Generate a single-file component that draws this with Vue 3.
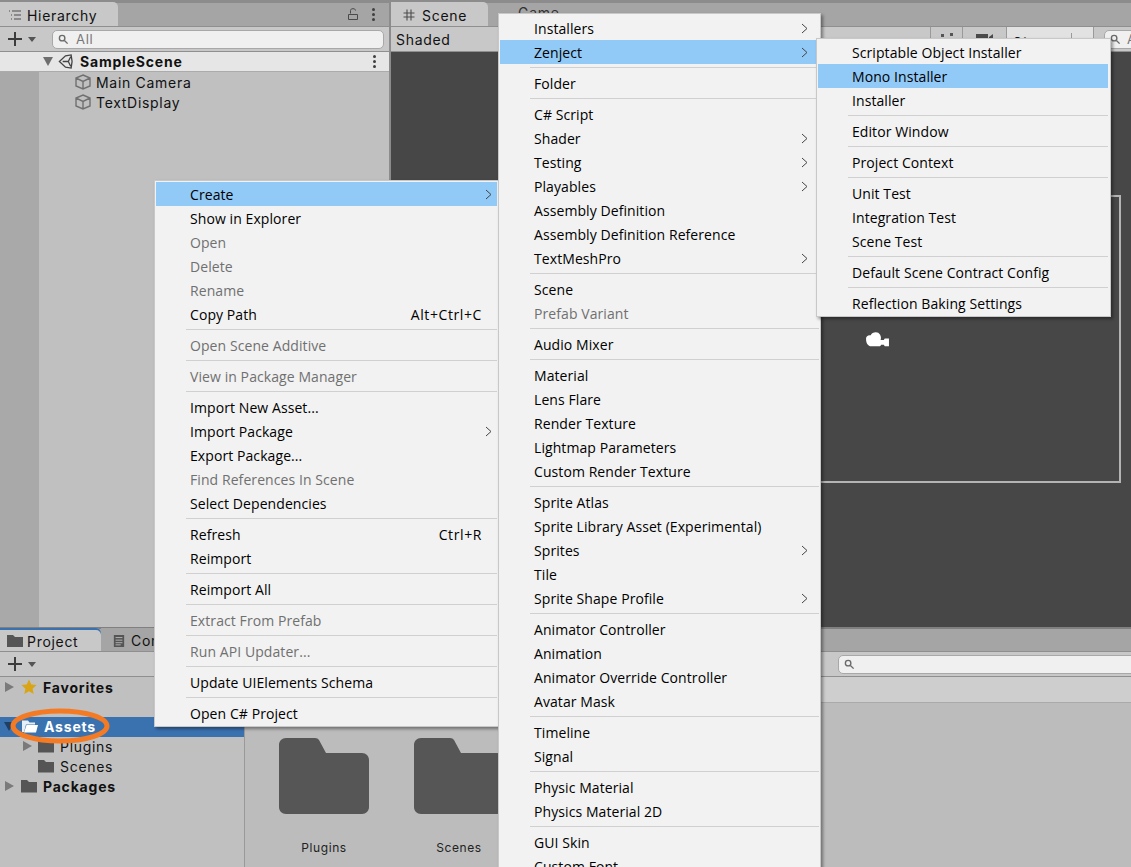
<template>
  <div class="editor">
    <div class="top-split">
      <section class="panel hierarchy">
        <div class="tabbar">
          <div class="tab hier-tab">
            <svg class="tab-icon" viewBox="0 0 14 12"><path d="M1 2h1M4 2h9M3 6h1M6 6h7M3 10h1M6 10h7" stroke="#4d4d4d" stroke-width="1.2" fill="none"/></svg>
            <span>Hierarchy</span>
          </div>
          <div class="tab-tools">
            <svg class="lock" viewBox="0 0 10 12"><path d="M2.500 5.500V2.500C2.500 1.300 3.500 .7 5 .7S7.500 1.300 7.500 2.500M.5 6.500h9v5h-9z" stroke="#4a4a4a" fill="none"/></svg>
            <span class="kebab"><i></i><i></i><i></i></span>
          </div>
        </div>
        <div class="toolbar">
          <svg class="plus" viewBox="0 0 16 16"><path d="M8 1v14M1 8h14" stroke="#3c3c3c" stroke-width="2"/></svg>
          <span class="caret"></span>
          <div class="search hier-search">
            <svg class="glass" viewBox="0 0 12 12"><circle cx="4.500" cy="4.500" r="3" stroke="#6a6a6a" stroke-width="1.500" fill="none"/><path d="M7 7l3.500 3.500" stroke="#6a6a6a" stroke-width="1.500"/></svg>
            <span>All</span>
          </div>
        </div>
        <div class="scene-row">
          <span class="tri tri-down"></span>
          <svg class="unity" viewBox="0 0 16 16"><path d="M1.500 8L8 2l6-1 1 7-1 7-6-1zM5 8h6M11 8l2.500-5M11 8l2.500 5" stroke="#444" stroke-width="1.400" fill="none"/></svg>
          <b>SampleScene</b>
          <span class="kebab row-kebab"><i></i><i></i><i></i></span>
        </div>
        <div class="hier-list">
          <div v-for="name in hierarchyItems" :key="name" class="hier-item">
            <svg class="cube" viewBox="0 0 16 16"><path d="M8 1l7 3v8l-7 3-7-3V4zM1 4l7 3.500L15 4M8 7.500V15" stroke="#707070" stroke-width="1.400" fill="none"/></svg>
            <span>{{ name }}</span>
          </div>
        </div>
      </section>

      <section class="panel scene">
        <div class="tabbar">
          <div class="tab scene-tab">
            <svg class="tab-icon hash" viewBox="0 0 12 12"><path d="M4 .5v11M8 .5v11M.5 4h11M.5 8h11" stroke="#4d4d4d" stroke-width="1.100" fill="none"/></svg>
            <span>Scene</span>
          </div>
          <div class="tab game-tab">Game</div>
        </div>
        <div class="toolbar scene-toolbar">
          <span>Shaded</span>
          <div class="scene-tools">
            <span class="tool tool-a"><svg viewBox="0 0 18 10"><path d="M3 2h3v3H3zM12 1h3v3h-3zM7 6h4v4H7z" fill="#555"/></svg></span>
            <span class="tool tool-b"><svg viewBox="0 0 18 10"><path d="M0 2h12v8H0zM13 5l4-3v8l-4-3z" fill="#4a4a4a"/></svg></span>
            <span class="gizmos"><span>Gizmos</span><i></i></span>
            <div class="search scene-search">
              <svg class="glass" viewBox="0 0 12 12"><circle cx="4.500" cy="4.500" r="3" stroke="#6a6a6a" stroke-width="1.500" fill="none"/><path d="M7 7l3.500 3.500" stroke="#6a6a6a" stroke-width="1.500"/></svg>
              <span>All</span>
            </div>
          </div>
        </div>
        <div class="viewport">
          <div class="game-frame"></div>
          <svg class="camera" viewBox="0 0 24 18"><path d="M1 8c0-2 2-3.500 4.500-3 1-3 7-4.500 9-.5 1 2 1 3.500.5 5l3 0 1-1.500h4v7.500h-4l-1-1.500h-2.500c-.5 1-1 1.500-2 1.500H6c-3 0-5-3-5-7z" fill="#fff"/></svg>
        </div>
      </section>
    </div>

    <section class="panel project">
      <div class="tabbar project-tabs">
        <div class="tab project-tab">
          <svg class="tab-icon" viewBox="0 0 16 14"><path d="M0 1h6l2 2h8v10H0z" fill="#555"/></svg>
          <span>Project</span>
        </div>
        <div class="tab console-tab">
          <svg class="tab-icon" viewBox="0 0 12 14"><path d="M0 0h12v14H0z" fill="#555"/><path d="M2 3h8M2 6h8M2 9h8M2 11.500h6" stroke="#c0c0c0"/></svg>
          <span>Console</span>
        </div>
      </div>
      <div class="toolbar project-toolbar">
        <svg class="plus" viewBox="0 0 16 16"><path d="M8 1v14M1 8h14" stroke="#3c3c3c" stroke-width="2"/></svg>
        <span class="caret"></span>
        <div class="search project-search">
          <svg class="glass" viewBox="0 0 12 12"><circle cx="4.500" cy="4.500" r="3" stroke="#6a6a6a" stroke-width="1.500" fill="none"/><path d="M7 7l3.500 3.500" stroke="#6a6a6a" stroke-width="1.500"/></svg>
        </div>
      </div>
      <div class="project-body">
        <div class="tree">
          <div class="tree-row root">
            <span class="tri tri-right"></span>
            <svg class="star" viewBox="0 0 16 16"><path d="M8 .5l2.300 5 5.200.6-3.900 3.600 1.100 5.300L8 12.300 3.300 15l1.100-5.300L.5 6.100l5.200-.6z" fill="#d9a514"/></svg>
            <b>Favorites</b>
          </div>
          <div class="tree-gap"></div>
          <div class="tree-row root selected">
            <span class="tri tri-down dark"></span>
            <svg class="folder" viewBox="0 0 16 14"><path d="M0 1.500h6l1.500 2H13v2H4L2 13H0z" fill="#e6eef7"/><path d="M4.500 6H16l-2 7.500H2z" fill="#fff"/></svg>
            <b>Assets</b>
          </div>
          <div class="tree-row child">
            <span class="tri tri-right"></span>
            <svg class="folder" viewBox="0 0 16 14"><path d="M0 1h6l2 2h8v10.500H0z" fill="#555"/></svg>
            <span>Plugins</span>
          </div>
          <div class="tree-row child no-arrow">
            <svg class="folder" viewBox="0 0 16 14"><path d="M0 1h6l2 2h8v10.500H0z" fill="#555"/></svg>
            <span>Scenes</span>
          </div>
          <div class="tree-row root">
            <span class="tri tri-right"></span>
            <svg class="folder" viewBox="0 0 16 14"><path d="M0 1h6l2 2h8v10.500H0z" fill="#555"/></svg>
            <b>Packages</b>
          </div>
        </div>
        <div class="assets-view">
          <div class="breadcrumb"></div>
          <div class="asset-grid">
            <div v-for="name in assetFolders" :key="name" class="asset">
              <svg class="big-folder" viewBox="0 0 90 76"><path d="M7 0h29c2 0 3 .7 4 2l7 13h36c4 0 7 3 7 7v47c0 4-3 7-7 7H7c-4 0-7-3-7-7V7c0-4 3-7 7-7z" fill="#565656"/></svg>
              <span>{{ name }}</span>
            </div>
          </div>
        </div>
      </div>
    </section>

    <svg class="annotation" viewBox="0 0 100 36"><ellipse cx="50" cy="18" rx="47" ry="15" fill="none" stroke="#f47b24" stroke-width="5"/></svg>

    <div v-for="menu in menus" :key="menu.id" class="menu" :class="`menu-${menu.id}`">
      <template v-for="(item, i) in menu.items" :key="i">
        <div v-if="item === '-'" class="sep"></div>
        <div
          v-else
          class="item"
          :class="{ active: item.active, disabled: item.disabled }"
        >
          <span class="label">{{ item.label }}</span>
          <span v-if="item.keys" class="keys">{{ item.keys }}</span>
          <svg v-if="item.sub" class="chev" viewBox="0 0 7 11"><path d="M1 1l5 4.500L1 10" stroke="#444" fill="none"/></svg>
        </div>
      </template>
    </div>
  </div>
</template>

<script setup>
const hierarchyItems = ['Main Camera', 'TextDisplay']
const assetFolders = ['Plugins', 'Scenes']

const t = (label, opts = {}) => ({ label, ...opts })
const off = (label) => ({ label, disabled: true })
const sub = (label, opts = {}) => ({ label, sub: true, ...opts })

const menus = [
  {
    id: 'main',
    items: [
      sub('Create', { active: true }), t('Show in Explorer'), off('Open'), off('Delete'), off('Rename'),
      t('Copy Path', { keys: 'Alt+Ctrl+C' }), '-',
      off('Open Scene Additive'), '-',
      off('View in Package Manager'), '-',
      t('Import New Asset...'), sub('Import Package'), t('Export Package...'), off('Find References In Scene'), t('Select Dependencies'), '-',
      t('Refresh', { keys: 'Ctrl+R' }), t('Reimport'), '-',
      t('Reimport All'), '-',
      off('Extract From Prefab'), '-',
      off('Run API Updater...'), '-',
      t('Update UIElements Schema'), '-',
      t('Open C# Project'),
    ],
  },
  {
    id: 'create',
    items: [
      sub('Installers'), sub('Zenject', { active: true }), '-',
      t('Folder'), '-',
      t('C# Script'), sub('Shader'), sub('Testing'), sub('Playables'), t('Assembly Definition'), t('Assembly Definition Reference'), sub('TextMeshPro'), '-',
      t('Scene'), off('Prefab Variant'), '-',
      t('Audio Mixer'), '-',
      t('Material'), t('Lens Flare'), t('Render Texture'), t('Lightmap Parameters'), t('Custom Render Texture'), '-',
      t('Sprite Atlas'), t('Sprite Library Asset (Experimental)'), sub('Sprites'), t('Tile'), sub('Sprite Shape Profile'), '-',
      t('Animator Controller'), t('Animation'), t('Animator Override Controller'), t('Avatar Mask'), '-',
      t('Timeline'), t('Signal'), '-',
      t('Physic Material'), t('Physics Material 2D'), '-',
      t('GUI Skin'), t('Custom Font'),
    ],
  },
  {
    id: 'zenject',
    items: [
      t('Scriptable Object Installer'), t('Mono Installer', { active: true }), t('Installer'), '-',
      t('Editor Window'), '-',
      t('Project Context'), '-',
      t('Unit Test'), t('Integration Test'), t('Scene Test'), '-',
      t('Default Scene Contract Config'), '-',
      t('Reflection Baking Settings'),
    ],
  },
]
</script>

<style>
html, body {
  margin: 0;
  background: #a5a5a5;
}
</style>

<style scoped>
.editor {
  position: relative;
  width: 1131px;
  height: 867px;
  overflow: hidden;
  display: flex;
  flex-direction: column;
  background: #8a8a8a;
  font-family: Inter, "Liberation Sans", sans-serif;
  font-size: 14px;
  color: #111;
  letter-spacing: 0.7px;
}

b {
  letter-spacing: 0.8px;
}

.top-split {
  display: flex;
  height: 627px;
  flex: none;
  gap: 2px;
  padding-top: 3px;
  box-sizing: border-box;
  background: #8c8c8c;
}

.panel {
  display: flex;
  flex-direction: column;
  background: #c0c0c0;
}

.hierarchy {
  width: 389px;
  flex: none;
}

.scene {
  flex: 1;
  min-width: 0;
}

.tabbar {
  display: flex;
  align-items: flex-end;
  height: 24px;
  flex: none;
  background: #a5a5a5;
  border-bottom: 1px solid #8f8f8f;
  box-sizing: border-box;
}

.tab {
  display: flex;
  align-items: center;
  height: 24px;
  box-sizing: border-box;
  padding-left: 8px;
  padding-top: 2px;
  background: #c8c8c8;
  border-radius: 0 5px 0 0;
}

.tab-icon {
  width: 14px;
  height: 12px;
  margin-right: 5px;
}

.hier-tab {
  width: 118px;
}

.tab-tools {
  margin-left: auto;
  display: flex;
  align-items: center;
  gap: 14px;
  height: 24px;
  padding-right: 14px;
}

.lock {
  width: 10px;
  height: 12px;
}

.kebab {
  display: flex;
  flex-direction: column;
  gap: 2px;
}

.kebab i {
  width: 3px;
  height: 3px;
  border-radius: 50%;
  background: #3f3f3f;
}

.toolbar {
  display: flex;
  align-items: center;
  height: 25px;
  flex: none;
  box-sizing: border-box;
  background: #c8c8c8;
  border-bottom: 1px solid #8f8f8f;
}

.plus {
  width: 16px;
  height: 16px;
  margin-left: 7px;
}

.caret {
  width: 0;
  height: 0;
  margin-left: 5px;
  border-left: 4.500px solid transparent;
  border-right: 4.500px solid transparent;
  border-top: 5px solid #555;
}

.search {
  display: flex;
  align-items: center;
  height: 19px;
  box-sizing: border-box;
  background: #f0f0f0;
  border: 1px solid #a8a8a8;
  border-radius: 5px;
  color: #777;
  font-size: 13px;
}

.glass {
  width: 11px;
  height: 11px;
  margin: 0 6px 0 5px;
}

.hier-search {
  width: 332px;
  margin-left: 16px;
}

.hier-search .glass {
  margin-right: 7px;
}

.scene-row {
  display: flex;
  align-items: center;
  height: 20px;
  flex: none;
  padding-left: 43px;
  background: #e6e6e6;
  border-bottom: 1px solid #ababab;
  box-sizing: border-box;
}

.scene-row b {
  margin-left: 7px;
}

.unity {
  width: 15px;
  height: 15px;
  margin-left: 5px;
}

.row-kebab {
  margin-left: auto;
  margin-right: 13px;
}

.hier-list {
  flex: 1;
  padding: 1px 0 0 39px;
  background: linear-gradient(to right, #a9a9a9 39px, #c0c0c0 39px);
}

.hier-item {
  display: flex;
  align-items: center;
  height: 20px;
  padding-left: 36px;
  padding-bottom: 2px;
  box-sizing: border-box;
}

.cube {
  width: 16px;
  height: 16px;
  margin-right: 5px;
}

.tri {
  display: inline-block;
  width: 0;
  height: 0;
  flex: none;
}

.tri-down {
  border-left: 5px solid transparent;
  border-right: 5px solid transparent;
  border-top: 9px solid #6e6e6e;
}

.tri-down.dark {
  border-top-color: #1f3f63;
}

.tri-right {
  border-top: 5px solid transparent;
  border-bottom: 5px solid transparent;
  border-left: 9px solid #7a7a7a;
}

.scene-tab {
  width: 97px;
  padding-left: 12px;
}

.hash {
  width: 12px;
  margin-right: 7px;
}

.game-tab {
  width: 100px;
  background: transparent;
  padding: 0 0 3px 30px;
  color: #333;
}

.scene-toolbar {
  padding-left: 5px;
}

.scene-tools {
  margin-left: auto;
  display: flex;
  align-items: center;
  height: 100%;
}

.tool {
  display: flex;
  justify-content: center;
  padding-top: 5px;
  height: 100%;
  border-left: 1px solid #9a9a9a;
  box-sizing: border-box;
  background: #c8c8c8;
}

.tool svg {
  width: 18px;
  height: 10px;
}

.tool-a {
  width: 32px;
}

.tool-b {
  width: 44px;
}

.gizmos {
  display: flex;
  align-items: center;
  width: 88px;
  height: 100%;
  box-sizing: border-box;
  padding: 6px 0 0 5px;
  background: #e2e2e2;
  border-left: 1px solid #9a9a9a;
  border-right: 1px solid #9a9a9a;
}

.gizmos i {
  width: 1px;
  height: 100%;
  margin-left: auto;
  margin-right: 21px;
  background: #9a9a9a;
}

.scene-search {
  width: 60px;
  margin-left: 10px;
  margin-right: -33px;
}

.viewport {
  position: relative;
  flex: 1;
  background: #474747;
}

.game-frame {
  position: absolute;
  left: 210px;
  top: 143px;
  width: 516px;
  height: 284px;
  border: 2px solid #b4b4b4;
}

.camera {
  position: absolute;
  left: 474px;
  top: 278px;
  width: 25px;
  height: 19px;
}

.project {
  flex: 1;
  min-height: 0;
  border-top: 2px solid #808080;
}

.project-tabs {
  height: 23px;
}

.project-tab {
  position: relative;
  width: 101px;
  height: 23px;
  padding-left: 7px;
  padding-top: 3px;
  box-shadow: inset 0 2px 0 #3a72b0;
}

.project-tab .tab-icon {
  width: 16px;
  height: 14px;
  margin-right: 4px;
}

.console-tab {
  background: #a5a5a5;
  padding-left: 12px;
  height: 23px;
}

.console-tab .tab-icon {
  width: 12px;
  margin-right: 6px;
}

.project-search {
  position: relative;
  width: 340px;
  margin-left: auto;
  margin-right: -47px;
}

.project-body {
  flex: 1;
  display: flex;
  min-height: 0;
  background: #bcbcbc;
}

.tree {
  width: 244px;
  flex: none;
  padding-top: 1px;
  border-right: 1px solid #9a9a9a;
  background: #c0c0c0;
}

.tree-row {
  display: flex;
  align-items: center;
  height: 20px;
  padding-bottom: 2px;
  box-sizing: border-box;
}

.tree-gap {
  height: 19px;
}

.tree-row.root {
  padding-left: 5px;
}

.tree-row.child {
  padding-left: 23px;
}

.tree-row.no-arrow {
  padding-left: 38px;
}

.tree-row.selected {
  background: #3a72b0;
  color: #fff;
}

.tree-row .tri-down.dark {
  margin-left: -1px;
  margin-right: 1px;
}

.folder {
  width: 16px;
  height: 14px;
  flex: none;
  margin: 0 6px 0 7px;
}

.star {
  width: 16px;
  height: 16px;
  flex: none;
  margin: 0 6px 0 7px;
}

.child .folder {
  margin-left: 6px;
}

.no-arrow .folder {
  margin-left: 0;
}

.assets-view {
  flex: 1;
  display: flex;
  flex-direction: column;
}

.breadcrumb {
  height: 25px;
  flex: none;
  background: #cecece;
  border-bottom: 1px solid #aaa;
}

.asset-grid {
  display: flex;
  gap: 45px;
  padding: 35px 0 0 34px;
}

.asset {
  display: flex;
  flex-direction: column;
  align-items: center;
  gap: 26px;
  width: 90px;
  font-size: 12px;
  color: #222;
  letter-spacing: 0.6px;
}

.big-folder {
  width: 90px;
  height: 76px;
}

.annotation {
  position: absolute;
  left: 10px;
  top: 708px;
  width: 100px;
  height: 36px;
}

.menu {
  position: absolute;
  box-sizing: border-box;
  padding: 1px;
  background: #f2f2f2;
  border: 1px solid #c8c8c8;
  box-shadow: 2px 2px 3px rgba(0, 0, 0, 0.4);
  font-family: "Open Sans", "Noto Sans", sans-serif;
  font-size: 14px;
  letter-spacing: 0.08px;
  color: #000;
}

.menu-main {
  left: 154px;
  top: 180px;
  width: 345px;
}

.menu-create {
  left: 498px;
  top: 13px;
  width: 323px;
  height: 900px;
  padding-top: 2px;
}

.menu-zenject {
  left: 816px;
  top: 38px;
  width: 295px;
  padding-right: 2px;
}

.item {
  display: flex;
  align-items: center;
  height: 24px;
  padding-left: 34px;
  padding-right: 16px;
  white-space: nowrap;
}

.item.active {
  background: #91c9f7;
}

.item.disabled {
  color: #707070;
}

.keys {
  margin-left: auto;
  letter-spacing: 0.6px;
  margin-right: -1px;
}

.chev {
  width: 7px;
  height: 11px;
  margin-left: auto;
  margin-right: -5px;
}

.menu-main .chev {
  margin-right: -11px;
}

.sep {
  height: 1px;
  margin: 3px 0 3px 30px;
  background: #d0d0d0;
}
</style>
